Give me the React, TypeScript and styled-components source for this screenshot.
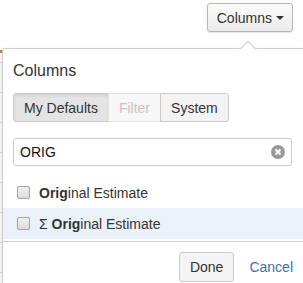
import styled, { createGlobalStyle, css } from "styled-components";

const GlobalStyle = createGlobalStyle`
  body {
    margin: 0;
    font-family: "Liberation Sans", Arial, sans-serif;
    font-size: 14px;
    color: #333;
    background: #fff;
  }
`;

const Page = styled.div`
  position: relative;
  width: 303px;
  height: 283px;
  overflow: hidden;
`;

const Toolbar = styled.div`
  display: flex;
  justify-content: flex-end;
  padding: 3px 10px 0 0;
  height: 50px;
  box-sizing: border-box;
`;

const ToggleButton = styled.button`
  display: flex;
  align-items: center;
  gap: 4px;
  height: 29px;
  padding: 0 8px 0 9px;
  font: inherit;
  font-size: 14px;
  color: #333;
  background: linear-gradient(#fafafa, #ececec);
  border: 1px solid #b5b5b5;
  border-radius: 3px;
  box-shadow: 0 1px 1px rgba(0, 0, 0, 0.1);
`;

const Caret = styled.span`
  width: 0;
  height: 0;
  border-left: 4px solid transparent;
  border-right: 4px solid transparent;
  border-top: 4px solid #333;
`;

const Table = styled.div`
  display: flex;
  flex-direction: column;
`;

const TableRow = styled.div<{ $head?: boolean }>`
  height: ${(p) => (p.$head ? "9px" : "29px")};
  border-bottom: 1px solid #ddd;
  ${(p) =>
    p.$head &&
    css`
      border-top: 3px solid #d0813a;
    `}
`;

const Popover = styled.div`
  position: absolute;
  top: 48px;
  left: 2px;
  width: 303px;
  background: #fff;
  border: 1px solid #ccc;
  border-radius: 3px;
  box-shadow: 0 3px 6px rgba(0, 0, 0, 0.15);
`;

const Arrow = styled.span`
  position: absolute;
  top: -6px;
  left: 239px;
  width: 11px;
  height: 11px;
  background: #fff;
  border-top: 1px solid #ccc;
  border-left: 1px solid #ccc;
  transform: rotate(45deg);
`;

const Body = styled.div`
  display: flex;
  flex-direction: column;
  padding: 12px 12px 0 10px;
`;

const Heading = styled.h2`
  margin: 0;
  font-size: 16px;
  font-weight: normal;
  line-height: 20px;
`;

const Group = styled.div`
  display: flex;
  margin-top: 12px;
`;

const GroupButton = styled.button<{ $active?: boolean }>`
  height: 29px;
  padding: 0 10px;
  font: inherit;
  font-size: 14px;
  color: #333;
  background: #f3f3f3;
  border: 1px solid #ccc;
  margin-left: -1px;
  &:first-child {
    margin-left: 0;
    border-radius: 3px 0 0 3px;
  }
  &:last-child {
    border-radius: 0 3px 3px 0;
  }
  &:disabled {
    color: #c4c4c4;
    background: #f7f7f7;
    border-color: #e2e2e2;
  }
  ${(p) =>
    p.$active &&
    css`
      background: #e4e4e4;
      box-shadow: inset 0 2px 3px rgba(0, 0, 0, 0.08);
    `}
`;

const SearchBox = styled.div`
  display: flex;
  align-items: center;
  margin-top: 16px;
  height: 28px;
  width: 279px;
  box-sizing: border-box;
  padding: 0 6px 0 6px;
  border: 1px solid #ccc;
  border-radius: 3px;
`;

const SearchInput = styled.input`
  flex: 1;
  min-width: 0;
  border: 0;
  outline: none;
  padding: 0;
  font: inherit;
  font-size: 14px;
  color: #111;
`;

const List = styled.div`
  display: flex;
  flex-direction: column;
  margin-top: 11px;
`;

const Row = styled.label<{ $hover?: boolean }>`
  display: flex;
  align-items: center;
  gap: 9px;
  height: 31px;
  padding-left: 14px;
  font-size: 14px;
  color: #333;
  background: ${(p) => (p.$hover ? "#eaf1f9" : "transparent")};
`;

const Check = styled.span`
  width: 11px;
  height: 11px;
  border: 1px solid #a3a3a3;
  border-radius: 2px;
  background: linear-gradient(#f0f0f0, #dcdcdc);
`;

const Footer = styled.div`
  display: flex;
  justify-content: flex-end;
  align-items: center;
  gap: 15px;
  border-top: 1px solid #ccc;
  margin-top: 2px;
  padding: 10px 13px 2px 0;
`;

const DoneButton = styled.button`
  height: 30px;
  padding: 0 10px;
  font: inherit;
  font-size: 14px;
  color: #333;
  background: #f4f4f4;
  border: 1px solid #ccc;
  border-radius: 3px;
`;

const CancelLink = styled.a`
  color: #3572b0;
  font-size: 14px;
  text-decoration: none;
`;

const ClearIcon = () => (
  <svg width="14" height="14" viewBox="0 0 14 14">
    <circle cx="7" cy="7" r="7" fill="#999" />
    <path d="M4.5 4.5 L9.5 9.5 M9.5 4.5 L4.5 9.5" stroke="#fff" strokeWidth="2" />
  </svg>
);

const Label = ({ sigma }: { sigma?: boolean }) => (
  <span>
    {sigma ? "Σ " : ""}
    <b>Orig</b>inal Estimate
  </span>
);

export default function App() {
  return (
    <Page>
      <GlobalStyle />
      <Toolbar>
        <ToggleButton>
          Columns <Caret />
        </ToggleButton>
      </Toolbar>
      <Table>
        <TableRow $head />
        <TableRow />
        <TableRow />
        <TableRow />
        <TableRow />
        <TableRow />
        <TableRow />
        <TableRow />
      </Table>
      <Popover>
        <Arrow />
        <Body>
          <Heading>Columns</Heading>
          <Group>
            <GroupButton $active>My Defaults</GroupButton>
            <GroupButton disabled>Filter</GroupButton>
            <GroupButton>System</GroupButton>
          </Group>
          <SearchBox>
            <SearchInput defaultValue="ORIG" />
            <ClearIcon />
          </SearchBox>
        </Body>
        <List>
          <Row>
            <Check />
            <Label />
          </Row>
          <Row $hover>
            <Check />
            <Label sigma />
          </Row>
        </List>
        <Footer>
          <DoneButton>Done</DoneButton>
          <CancelLink href="#">Cancel</CancelLink>
        </Footer>
      </Popover>
    </Page>
  );
}
